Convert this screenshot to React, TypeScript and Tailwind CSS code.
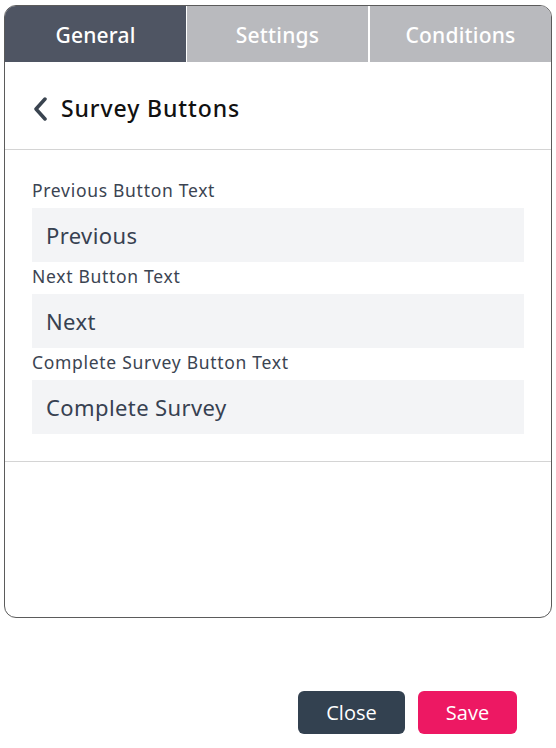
const font = { fontFamily: '"Noto Sans", "Open Sans", sans-serif' };

function Field({ label, value }: { label: string; value: string }) {
  return (
    <div className="flex flex-col">
      <label className="text-[17.5px] leading-[22px] tracking-[0.7px] text-[#3b4452] mb-[7px]">{label}</label>
      <div className="h-[54px] bg-[#f3f4f6] flex items-center px-[14px] text-[22px] tracking-[0.4px] text-[#374151]">
        {value}
      </div>
    </div>
  );
}

export default function App() {
  return (
    <div className="w-[556px] h-[748px] bg-white relative" style={font}>
      <div className="pt-[5px] pl-[4px] pr-[4px]">
        <div className="h-[613px] border border-[#5b5b5b] rounded-[12px] overflow-hidden flex flex-col">
          <div className="flex h-[56px] shrink-0">
            <div className="flex-1 bg-[#4f5563] text-white text-[21px] tracking-[0.2px] font-medium flex items-center justify-center pt-[3px]">
              General
            </div>
            <div className="flex-1 bg-[#b9babe] text-white text-[21px] tracking-[0.2px] font-medium flex items-center justify-center pt-[3px] border-l border-white">
              Settings
            </div>
            <div className="flex-1 bg-[#b9babe] text-white text-[21px] tracking-[0.2px] font-medium flex items-center justify-center pt-[3px] border-l-2 border-white">
              Conditions
            </div>
          </div>
          <div className="h-[88px] flex items-center pt-[6px] pl-[28px] gap-[12px] border-b border-[#d4d4d4]">
            <svg width="16" height="24" viewBox="0 0 16 24" fill="none">
              <path d="M12 2 L3 12 L12 22" stroke="#3a4450" strokeWidth="3.5" strokeLinecap="round" strokeLinejoin="round" />
            </svg>
            <span className="text-[23px] tracking-[0.9px] text-[#111] font-medium">Survey Buttons</span>
          </div>
          <div className="pt-[29px] pb-[27px] pl-[27px] pr-[27px] flex flex-col gap-[3px] border-b border-[#d4d4d4]">
            <Field label="Previous Button Text" value="Previous" />
            <Field label="Next Button Text" value="Next" />
            <Field label="Complete Survey Button Text" value="Complete Survey" />
          </div>
        </div>
      </div>
      <div className="flex justify-end gap-[13px] pr-[39px] mt-[73px]" style={{ fontFamily: '"Open Sans", sans-serif' }}>
        <button className="w-[107px] h-[43px] bg-[#334150] rounded-[6px] text-white text-[20px]">Close</button>
        <button className="w-[99px] h-[43px] bg-[#ed1863] rounded-[6px] text-white text-[20px]">Save</button>
      </div>
    </div>
  );
}
